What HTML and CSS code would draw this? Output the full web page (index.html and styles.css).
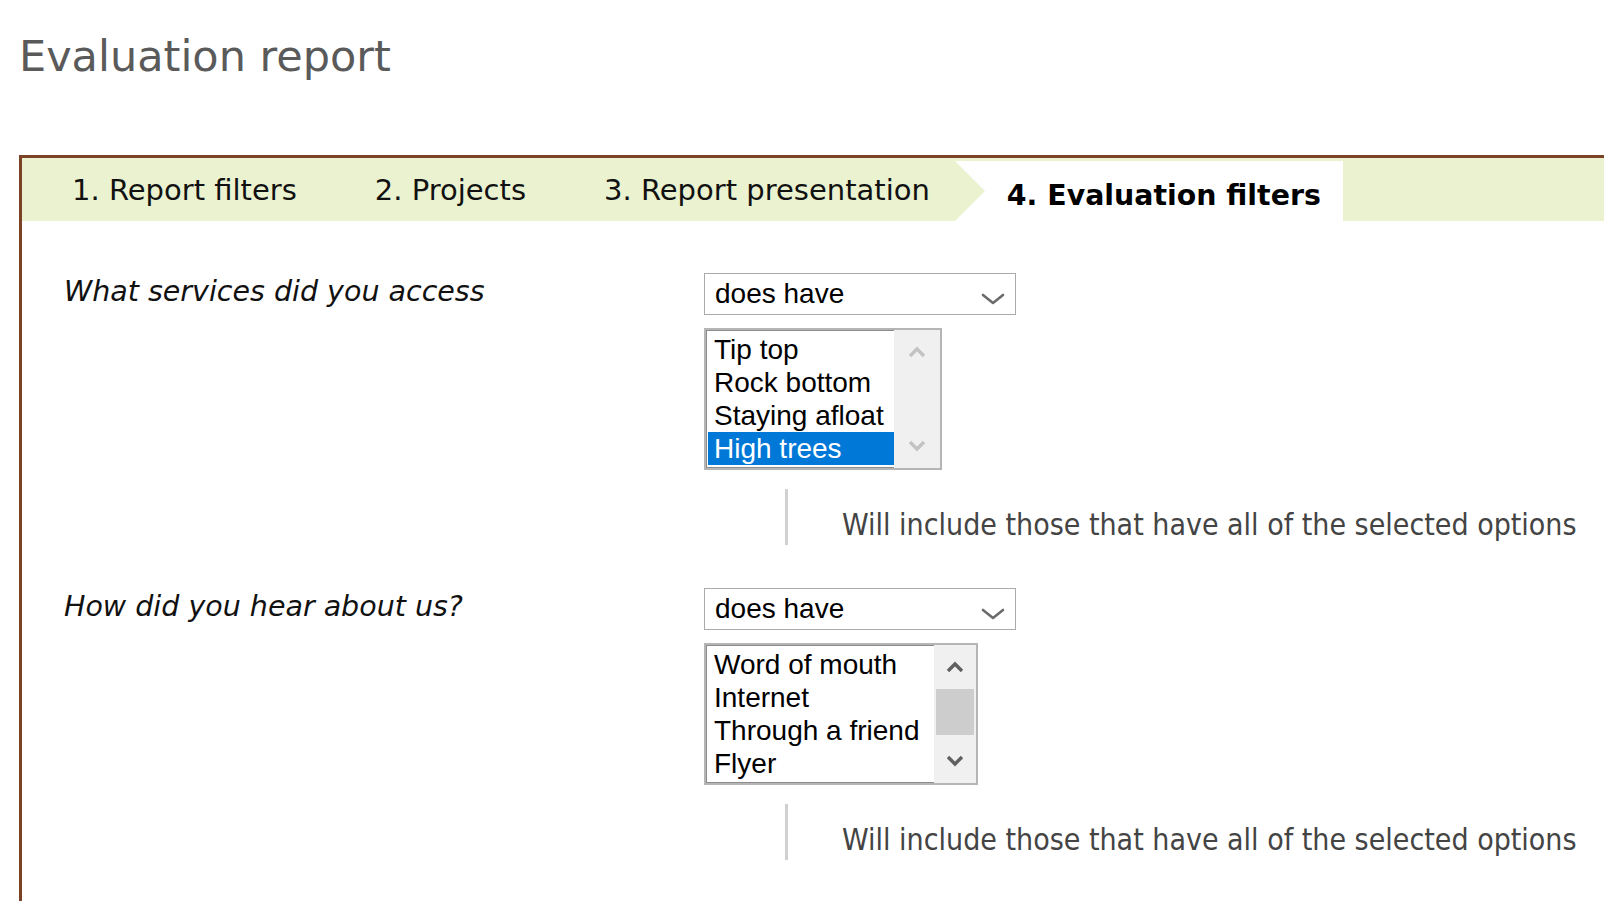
FILE: index.html
```html
<!DOCTYPE html>
<html lang="en">
<head>
<meta charset="utf-8">
<title>Evaluation report</title>
<link rel="stylesheet" href="styles.css">
</head>
<body>
<h1 class="title">Evaluation report</h1>
<div class="panel">
  <nav class="tabs">
    <div class="tab tab-first">1. Report filters</div>
    <div class="tab">2. Projects</div>
    <div class="tab tab-prev">3. Report presentation</div>
    <div class="tab tab-active">4. Evaluation filters</div>
  </nav>
  <div class="content">
    <section class="field">
      <div class="field-label">What services did you access</div>
      <div class="field-controls">
        <div class="select">
          <span>does have</span>
          <svg class="chev" width="24" height="12" viewBox="0 0 24 12"><path d="M2 2 L12 10 L22 2" fill="none" stroke="#6b6b6b" stroke-width="2.6" stroke-linejoin="round" stroke-linecap="round"/></svg>
        </div>
        <div class="listbox list-a">
          <div class="options">
            <div class="option">Tip top</div>
            <div class="option">Rock bottom</div>
            <div class="option">Staying afloat</div>
            <div class="option selected">High trees</div>
          </div>
          <div class="scrollbar disabled">
            <div class="sb-btn"><svg width="20" height="12" viewBox="0 0 20 12"><path d="M3 10 L10 3 L17 10" fill="none" stroke="currentColor" stroke-width="3.4"/></svg></div>
            <div class="sb-btn"><svg width="20" height="12" viewBox="0 0 20 12"><path d="M3 2 L10 9 L17 2" fill="none" stroke="currentColor" stroke-width="3.4"/></svg></div>
          </div>
        </div>
        <div class="note">Will include those that have all of the selected options</div>
      </div>
    </section>
    <section class="field">
      <div class="field-label">How did you hear about us?</div>
      <div class="field-controls">
        <div class="select">
          <span>does have</span>
          <svg class="chev" width="24" height="12" viewBox="0 0 24 12"><path d="M2 2 L12 10 L22 2" fill="none" stroke="#6b6b6b" stroke-width="2.6" stroke-linejoin="round" stroke-linecap="round"/></svg>
        </div>
        <div class="listbox list-b">
          <div class="options">
            <div class="option">Word of mouth</div>
            <div class="option">Internet</div>
            <div class="option">Through a friend</div>
            <div class="option">Flyer</div>
          </div>
          <div class="scrollbar">
            <div class="sb-btn"><svg width="20" height="12" viewBox="0 0 20 12"><path d="M3 10 L10 3 L17 10" fill="none" stroke="currentColor" stroke-width="3.4"/></svg></div>
            <div class="sb-track"><div class="sb-thumb"></div></div>
            <div class="sb-btn"><svg width="20" height="12" viewBox="0 0 20 12"><path d="M3 2 L10 9 L17 2" fill="none" stroke="currentColor" stroke-width="3.4"/></svg></div>
          </div>
        </div>
        <div class="note">Will include those that have all of the selected options</div>
      </div>
    </section>
  </div>
</div>
</body>
</html>
```

FILE: styles.css
```css
html, body {
  margin: 0;
  padding: 0;
  background: #fff;
}
body {
  height: 901px;
  overflow: hidden;
  font-family: "DejaVu Sans", Verdana, sans-serif;
}
.title {
  margin: 31px 0 0 19px;
  font-size: 43px;
  line-height: 50px;
  font-weight: normal;
  color: #5a5a5a;
}
.panel {
  margin: 74px 0 0 19px;
  border-top: 3px solid #7b4326;
  border-left: 3px solid #7b4326;
  min-height: 760px;
}
.tabs {
  display: flex;
  align-items: flex-start;
  height: 63px;
  background: #eaf2d0;
}
.tab {
  position: relative;
  box-sizing: border-box;
  height: 63px;
  padding: 16px 39px 0;
  font-size: 29px;
  line-height: 33px;
  color: #111;
  white-space: nowrap;
}
.tab-first {
  margin-left: 11px;
}
.tab-prev {
  padding-right: 25px;
  z-index: 1;
}
.tab-prev::after {
  content: "";
  position: absolute;
  right: -30px;
  top: 3px;
  border-left: 30px solid #eaf2d0;
  border-top: 30px solid transparent;
  border-bottom: 30px solid transparent;
}
.tab-active {
  height: 60px;
  margin-top: 3px;
  padding: 18px 22px 0 52px;
  background: #fff;
  font-size: 28.4px;
  font-weight: bold;
  color: #000;
}
.content {
  padding-top: 52px;
}
.field {
  display: flex;
  margin-bottom: 43px;
}
.field-label {
  box-sizing: border-box;
  width: 682px;
  flex: none;
  padding: 2px 0 0 42px;
  font-size: 28.5px;
  line-height: 33px;
  font-style: italic;
  color: #111;
}
.field-controls {
  display: flex;
  flex-direction: column;
  align-items: flex-start;
}
.select {
  box-sizing: border-box;
  width: 312px;
  height: 42px;
  border: 1px solid #ababab;
  padding: 0 10px 0 10px;
  display: flex;
  align-items: center;
  justify-content: space-between;
  font-family: "Liberation Sans", Arial, sans-serif;
  font-size: 28px;
  line-height: 32px;
  color: #000;
  margin-bottom: 13px;
}
.chev {
  margin-top: 10px;
}
.listbox {
  box-sizing: border-box;
  height: 142px;
  border: 2px solid #b5b5b5;
  box-shadow: inset 0 0 0 1px #8c8c8c;
  display: flex;
  margin-bottom: 19px;
  background: #fff;
}
.list-a { width: 238px; }
.list-b { width: 274px; }
.options {
  flex: 1;
  padding: 3px 0 3px 2px;
}
.option {
  height: 33px;
  line-height: 33px;
  padding-left: 6px;
  font-family: "Liberation Sans", Arial, sans-serif;
  font-size: 28px;
  color: #000;
  white-space: nowrap;
}
.option.selected {
  background: #0078d7;
  color: #fff;
}
.scrollbar {
  width: 42px;
  flex: none;
  background: #f0f0f0;
  display: flex;
  flex-direction: column;
  justify-content: space-between;
  color: #606060;
}
.scrollbar.disabled {
  width: 46px;
  color: #c3c3c3;
}
.sb-btn {
  height: 44px;
  display: flex;
  align-items: center;
  justify-content: center;
}
.sb-track {
  flex: 1;
}
.sb-thumb {
  height: 46px;
  margin: 0 2px;
  background: #cdcdcd;
}
.note {
  box-sizing: border-box;
  height: 56px;
  margin-left: 81px;
  border-left: 3px solid #d0d0d0;
  padding: 18px 0 0 54px;
  font-family: "DejaVu Sans Condensed", "DejaVu Sans", sans-serif;
  font-stretch: condensed;
  font-size: 30px;
  line-height: 35px;
  color: #444;
  white-space: nowrap;
}
```
